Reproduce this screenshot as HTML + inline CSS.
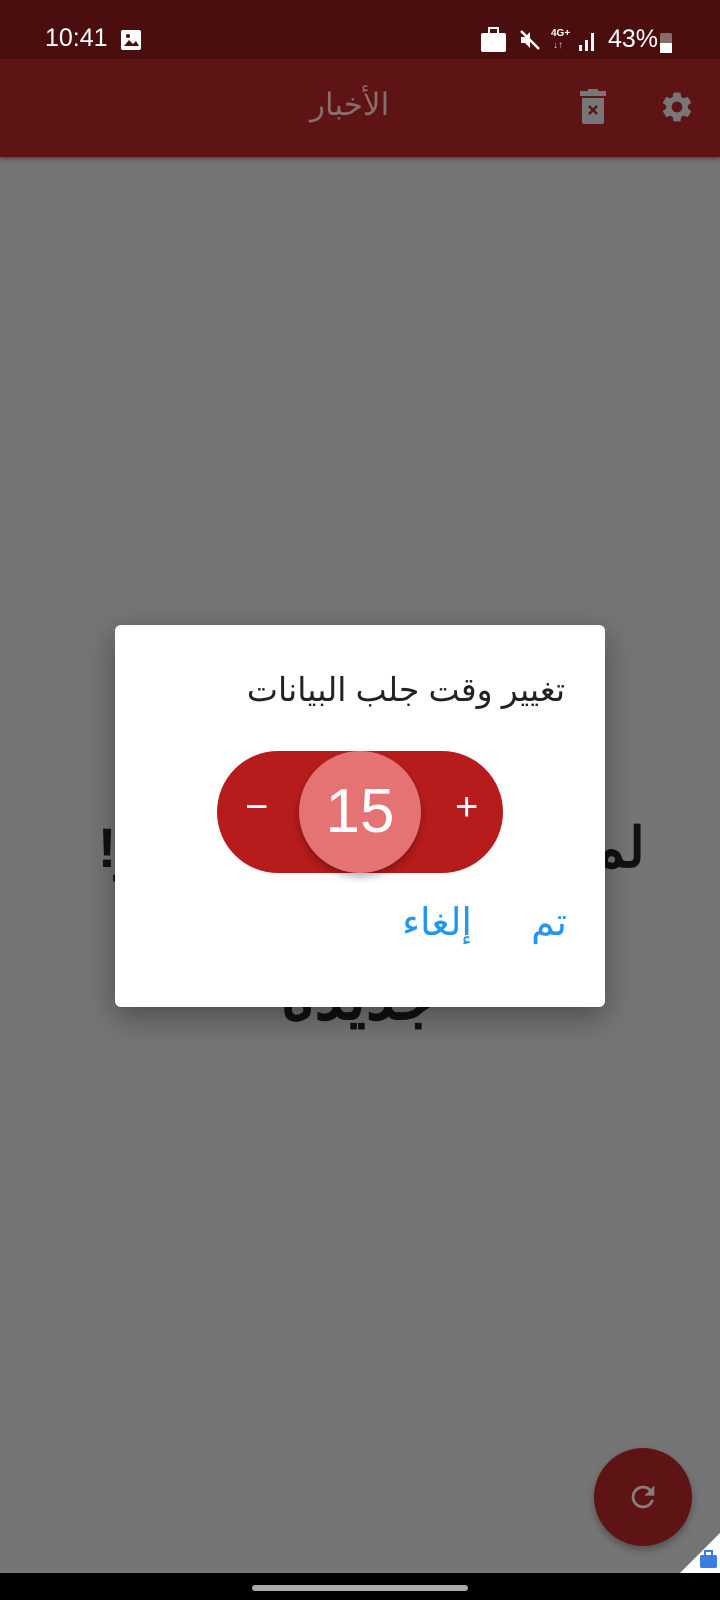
<!DOCTYPE html>
<html><head><meta charset="utf-8"><style>
*{margin:0;padding:0;box-sizing:border-box}
body{width:720px;height:1600px;overflow:hidden;background:#757575;position:relative;font-family:"Liberation Sans","Noto Sans CJK SC",sans-serif}
.a{position:absolute}
.sb{top:0;left:0;width:720px;height:59px;background:#4a0e0f;color:#fff}
.ab{top:59px;left:0;width:720px;height:98px;background:#5e1414;box-shadow:0 2px 4px rgba(0,0,0,.4)}
.bg{font-size:56px;font-weight:bold;color:#111;direction:rtl;white-space:nowrap}
.dlg{left:115px;top:625px;width:490px;height:382px;background:#fff;border-radius:6px;box-shadow:0 10px 30px rgba(0,0,0,.35)}
.pill{left:217px;top:751px;width:286px;height:122px;background:#b71c1c;border-radius:61px}
.knob{left:299px;top:751px;width:122px;height:122px;border-radius:50%;background:#e57373;box-shadow:0 4px 8px rgba(0,0,0,.3);color:#fff;font-size:62px;text-align:center;line-height:122px}
</style></head><body>
<div class="a sb">
<div class="a" style="left:45px;top:24px;font-size:25px">10:41</div>
<div class="a" style="left:121px;top:30px;width:20px;height:20px;background:#fff;border-radius:2px"><svg width="20" height="20"><path d="M3 16l5-6 4 4 3-3 3 5z" fill="#4a0e0f"/><circle cx="7" cy="6" r="2" fill="#4a0e0f"/></svg></div>
<div class="a" style="left:481px;top:33px;width:25px;height:19px;background:#fff;border-radius:2px"></div>
<div class="a" style="left:488px;top:27px;width:11px;height:7px;border:2px solid #fff;border-bottom:none"></div>
<svg class="a" style="left:518px;top:28px" width="24" height="24"><path d="M3 9h4l5-5v16l-5-5H3z" fill="#fff"/><path d="M3 3l18 18" stroke="#fff" stroke-width="2.5"/></svg>
<div class="a" style="left:551px;top:28px;font-size:10px;font-weight:bold">4G+</div>
<div class="a" style="left:553px;top:40px;font-size:10px;color:#ccc">↓↑</div>
<svg class="a" style="left:578px;top:30px" width="18" height="22"><rect x="1" y="15" width="3" height="6" fill="#fff"/><rect x="7" y="10" width="3" height="11" fill="#fff"/><rect x="13" y="3" width="3" height="18" fill="#fff"/></svg>
<div class="a" style="left:608px;top:25px;font-size:25px">43%</div>
<div class="a" style="left:660px;top:33px;width:12px;height:20px;background:#8a6a6a;border-radius:2px"><div style="position:absolute;bottom:0;width:12px;height:10px;background:#fff"></div></div>
</div>
<div class="a ab">
<div class="a" style="left:310px;top:28px;font-size:31px;color:#8a6d6d">الأخبار</div>
<svg class="a" style="left:578px;top:30px" width="30" height="36" viewBox="0 0 30 36"><rect x="2" y="2" width="26" height="5" fill="#777"/><rect x="10" y="0" width="10" height="3" fill="#777"/><path d="M4 9h22v24a2 2 0 0 1-2 2H6a2 2 0 0 1-2-2z" fill="#777"/><path d="M11 17l8 8M19 17l-8 8" stroke="#5e1414" stroke-width="2.5"/></svg>
<svg class="a" style="left:659px;top:30px" width="36" height="36" viewBox="0 0 24 24"><path fill="#777" d="M19.14 12.94a7.1 7.1 0 0 0 0-1.88l2.030-1.58a.5.5 0 0 0 .12-.61l-1.92-3.32a.5.5 0 0 0-.59-.22l-2.39.96a7 7 0 0 0-1.62-.94l-.36-2.54a.5.5 0 0 0-.5-.41h-3.84a.5.5 0 0 0-.5.41l-.36 2.54a7 7 0 0 0-1.62.94l-2.39-.96a.5.5 0 0 0-.59.22L2.690 8.87a.5.5 0 0 0 .12.61l2.03 1.58a7.1 7.1 0 0 0 0 1.88l-2.03 1.58a.5.5 0 0 0-.12.61l1.92 3.32c.12.22.37.29.59.22l2.39-.96c.5.38 1.04.7 1.62.94l.36 2.54c.05.24.25.41.5.41h3.84c.25 0 .45-.17.5-.41l.36-2.54a7 7 0 0 0 1.62-.94l2.39.96c.22.08.47 0 .59-.22l1.92-3.32a.5.5 0 0 0-.12-.61zM12 15.6A3.6 3.6 0 1 1 12 8.4a3.6 3.6 0 0 1 0 7.2z"/></svg>
</div>
<div class="a bg" style="left:100px;top:815px;width:545px;text-align:right">لم يتم العثور على أخبار!</div>
<div class="a bg" style="left:230px;top:960px;width:260px;text-align:center;font-size:64px">جديدة</div>
<div class="a dlg"></div>
<div class="a" style="right:155px;top:670px;font-size:33px;color:#222;direction:rtl">تغيير وقت جلب البيانات</div>
<div class="a pill"></div>
<div class="a" style="left:245px;top:785px;font-size:40px;color:#fff">−</div>
<div class="a" style="left:455px;top:785px;font-size:40px;color:#fff">+</div>
<div class="a knob">15</div>
<div class="a" style="right:153px;top:900px;font-size:38px;color:#2196f3">تم</div>
<div class="a" style="right:248px;top:900px;font-size:38px;color:#2196f3">إلغاء</div>
<div class="a" style="left:594px;top:1448px;width:98px;height:98px;border-radius:50%;background:#5e1414;box-shadow:0 4px 8px rgba(0,0,0,.3)"></div>
<svg class="a" style="left:626px;top:1480px" width="34" height="34" viewBox="0 0 24 24"><path fill="#8a7d7d" d="M17.65 6.35A7.960 7.960 0 0 0 12 4a8 8 0 1 0 7.73 10h-2.08A6 6 0 1 1 12 6c1.66 0 3.14.69 4.22 1.78L13 11h7V4z"/></svg>
<svg class="a" style="left:680px;top:1533px" width="40" height="40"><polygon points="40,0 40,40 0,40" fill="#fff"/><rect x="20" y="22" width="17" height="13" rx="2" fill="#3b7de0"/><rect x="25" y="18" width="7" height="5" fill="none" stroke="#3b7de0" stroke-width="2"/></svg>
<div class="a" style="left:0;top:1573px;width:720px;height:27px;background:#000"></div>
<div class="a" style="left:252px;top:1585px;width:216px;height:6px;border-radius:3px;background:#aaa"></div>
</body></html>
